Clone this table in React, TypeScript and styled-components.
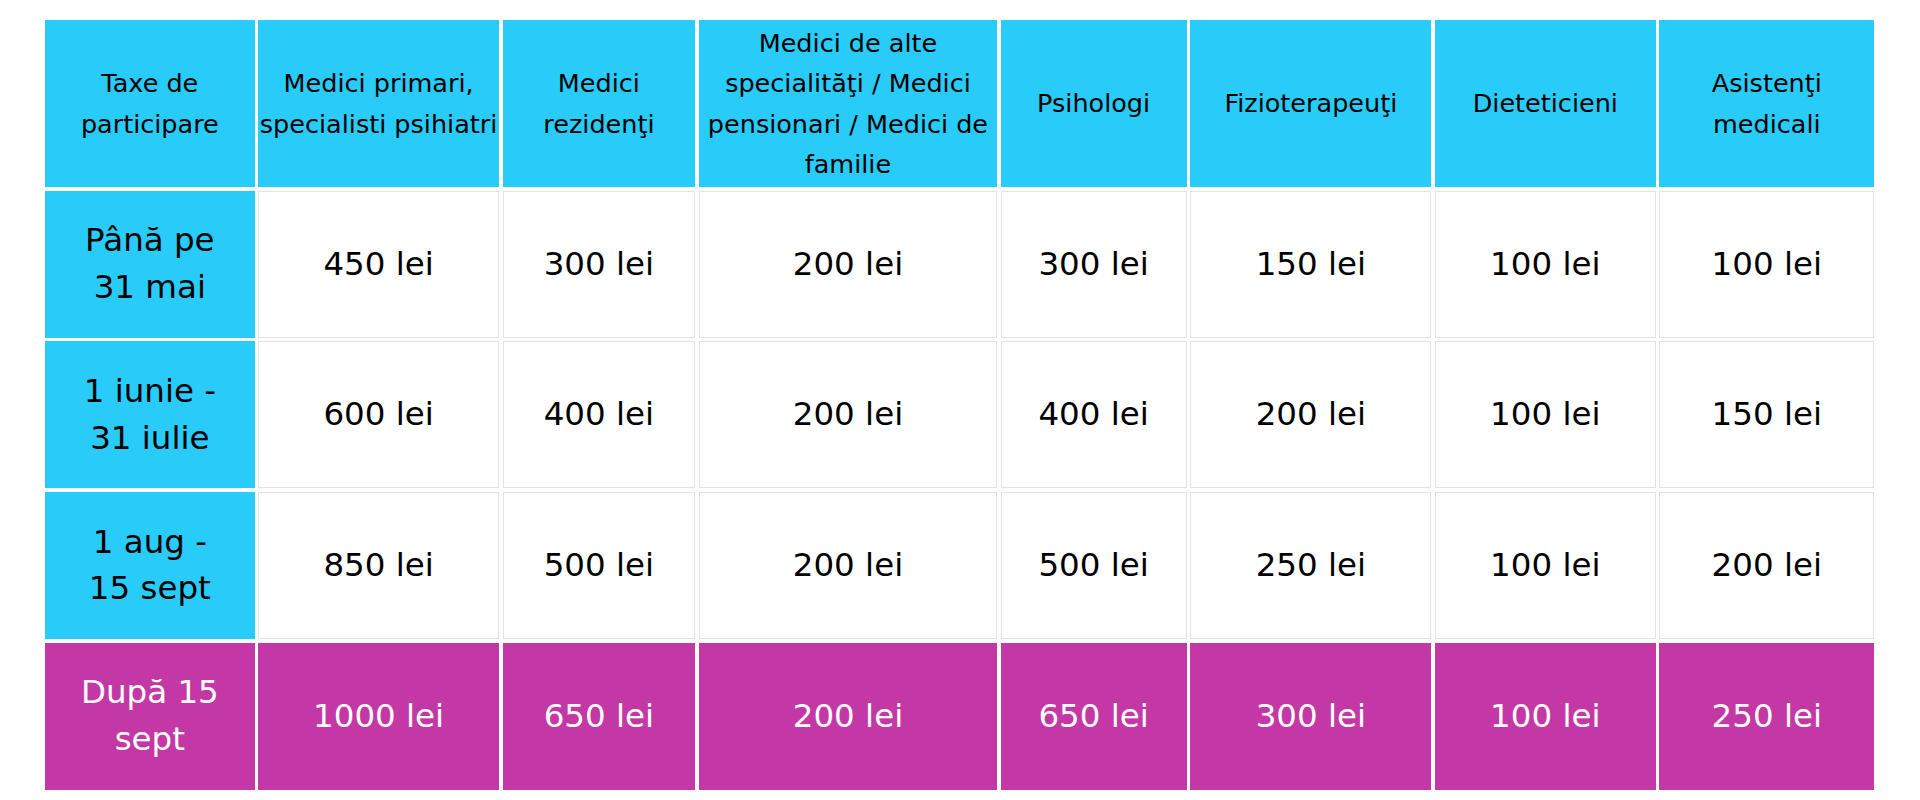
import React, { FC } from 'react';
import styled, { createGlobalStyle, css } from 'styled-components';

const GlobalStyle = createGlobalStyle`
  html, body {
    margin: 0;
    padding: 0;
    background: #ffffff;
  }
  body {
    font-family: "DejaVu Sans", "Liberation Sans", sans-serif;
    color: #000000;
  }
`;

type Tone = 'blue' | 'white' | 'magenta';

const Page = styled.main`
  padding: 20px 0 0 45px;
`;

const FeeGrid = styled.div`
  display: grid;
  grid-template-columns: 209.7px 240.5px 192.8px 298px 186px 241.2px 220.4px 215.3px;
  grid-template-rows: 167px repeat(4, 147px);
  gap: 3.67px;
  width: max-content;
`;

const Cell = styled.div<{ $tone: Tone; $head?: boolean }>`
  display: flex;
  align-items: center;
  justify-content: center;
  box-sizing: border-box;
  text-align: center;
  white-space: nowrap;
  font-size: ${({ $head }) => ($head ? '25.5px' : '32.5px')};
  line-height: ${({ $head }) => ($head ? '40.3px' : '46.7px')};
  ${({ $tone }) => {
    if ($tone === 'blue') {
      return css`
        background: #29cbf9;
        color: #000000;
      `;
    }
    if ($tone === 'magenta') {
      return css`
        background: #c438a6;
        color: #ffffff;
      `;
    }
    return css`
      background: #ffffff;
      color: #000000;
      border: 1.2px solid #e2e2e2;
    `;
  }}
`;

const Lines: FC<{ text: string }> = ({ text }) => (
  <span>
    {text.split('\n').map((line, i) => (
      <React.Fragment key={i}>
        {i > 0 && <br />}
        {line}
      </React.Fragment>
    ))}
  </span>
);

const headers = [
  'Taxe de\nparticipare',
  'Medici primari,\nspecialisti psihiatri',
  'Medici\nrezidenţi',
  'Medici de alte\nspecialităţi / Medici\npensionari / Medici de\nfamilie',
  'Psihologi',
  'Fizioterapeuţi',
  'Dieteticieni',
  'Asistenţi\nmedicali',
];

const rows: { period: string; prices: number[]; late?: boolean }[] = [
  { period: 'Până pe\n31 mai', prices: [450, 300, 200, 300, 150, 100, 100] },
  { period: '1 iunie -\n31 iulie', prices: [600, 400, 200, 400, 200, 100, 150] },
  { period: '1 aug -\n15 sept', prices: [850, 500, 200, 500, 250, 100, 200] },
  { period: 'După 15\nsept', prices: [1000, 650, 200, 650, 300, 100, 250], late: true },
];

const App: FC = () => (
  <>
    <GlobalStyle />
    <Page>
      <FeeGrid>
        {headers.map((h) => (
          <Cell key={h} $tone="blue" $head>
            <Lines text={h} />
          </Cell>
        ))}
        {rows.map((row) => (
          <React.Fragment key={row.period}>
            <Cell $tone={row.late ? 'magenta' : 'blue'}>
              <Lines text={row.period} />
            </Cell>
            {row.prices.map((p, i) => (
              <Cell key={i} $tone={row.late ? 'magenta' : 'white'}>
                {p} lei
              </Cell>
            ))}
          </React.Fragment>
        ))}
      </FeeGrid>
    </Page>
  </>
);

export default App;
